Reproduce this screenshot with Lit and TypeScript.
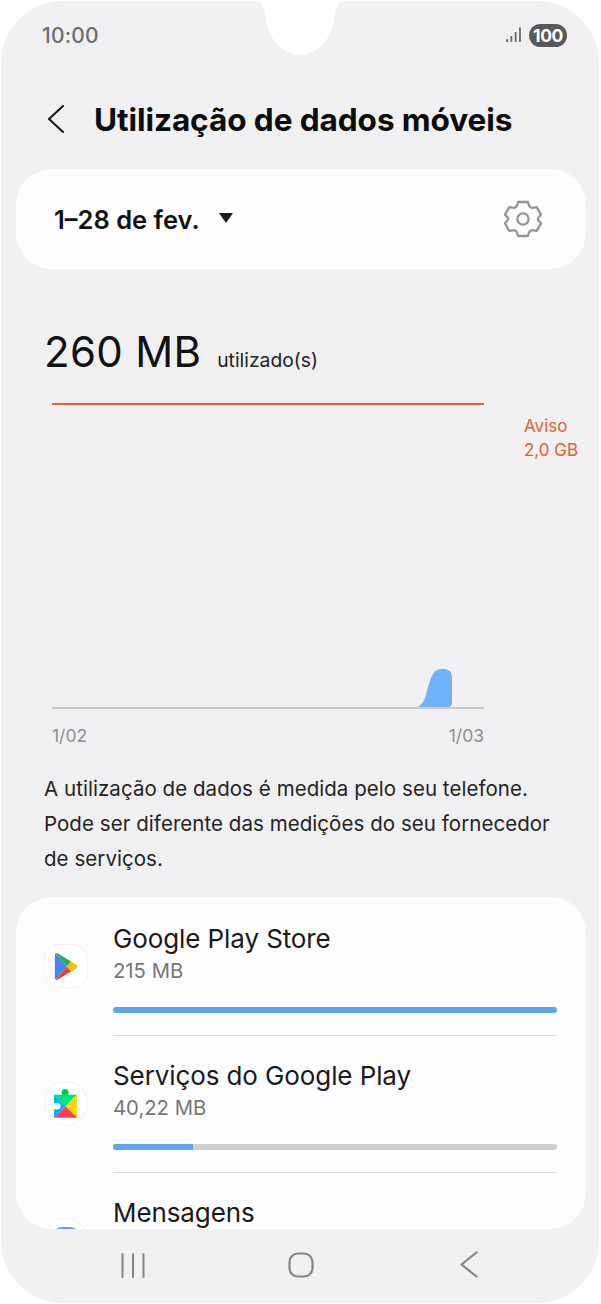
import { LitElement, html, css, nothing } from "lit";
import { customElement } from "lit/decorators.js";

@customElement("app-row")
class AppRow extends LitElement {
  static properties = { name: {}, size: {}, pct: { type: Number } };
  name = ""; size = ""; pct = 100;
  static styles = css`
    :host { display: flex; gap: 26px; }
    .ic { flex: none; width: 42px; height: 137px; box-sizing: border-box; padding-bottom: 3px; display: flex; align-items: center; justify-content: center; }
    .body { flex: 1; height: 137px; box-sizing: border-box; padding-top: 23px; border-bottom: 1px solid #dcdcde; }
    .n { font-size: 26px; line-height: 34px; color: #1a1a1a; letter-spacing: -0.1px; }
    .s { font-size: 20.3px; line-height: 28px; color: #77777a; margin-top: 1px; }
    .bar { height: 6px; border-radius: 3px; background: #cfcfd1; margin-top: 22px; overflow: hidden; }
    .fill { height: 100%; background: #5ea6ee; }
  `;
  render() {
    return html`<div class="ic"><slot></slot></div>
      <div class="body">
        <div class="n">${this.name}</div>
        ${this.size
          ? html`<div class="s">${this.size}</div>
              <div class="bar"><div class="fill" style="width:${this.pct}%"></div></div>`
          : nothing}
      </div>`;
  }
}

@customElement("app-root")
class AppRoot extends LitElement {
  static styles = css`
    :host { display: block; width: 601px; height: 1304px; background: #fff; font-family: Inter, "Noto Sans", sans-serif; overflow: hidden; }
    .phone { position: relative; box-sizing: border-box; margin: 1px 2px 0 1px; width: 598px; height: 1302px; background: #f1f1f3; border-radius: 62px; display: flex; flex-direction: column; overflow: hidden; }
    .notch { position: absolute; left: 251px; top: -1px; width: 96px; height: 57px; }
    .status { flex: none; height: 68px; display: flex; align-items: center; justify-content: space-between; padding: 0 32px 0 41px; }
    .time { font-size: 21px; font-weight: 500; color: #6e6e70; letter-spacing: 0.2px; }
    .sys { display: flex; align-items: center; gap: 7px; }
    .batt { width: 38px; height: 23px; border-radius: 12px; background: #59595b; color: #fff; font-size: 17.5px; font-weight: 700; display: flex; align-items: center; justify-content: center; letter-spacing: -0.4px; }
    .head { flex: none; height: 100px; display: flex; align-items: center; padding-left: 45px; box-sizing: border-box; }
    .head svg { margin-right: 30px; }
    h1 { margin: 0; font-size: 31.6px; font-weight: 700; color: #0c0c0c; letter-spacing: -0.1px; }
    .period { flex: none; margin: 0 13px 0 15px; height: 100px; background: #fdfdfe; border-radius: 36px; display: flex; align-items: center; justify-content: space-between; padding: 0 43px 0 38px; }
    .pl { display: flex; align-items: center; gap: 19px; font-size: 25.5px; font-weight: 600; color: #111; padding-top: 1px; }
    .tri { width: 0; height: 0; border-left: 7.5px solid transparent; border-right: 7.5px solid transparent; border-top: 10px solid #1c1c1c; margin-top: -3px; }
    .total { flex: none; display: flex; align-items: baseline; gap: 16px; padding: 53px 0 0 43px; height: 60px; }
    .big { font-size: 42px; font-weight: 400; color: #111; line-height: 60px; letter-spacing: 0.3px; }
    .unit { font-size: 19.3px; color: #222; }
    .chart { flex: none; display: flex; margin-top: 21px; }
    .plot { flex: none; margin-left: 51px; width: 432px; }
    .warn-line { height: 2px; background: #e2622e; }
    .area { height: 302px; border-bottom: 2px solid #c9c9cb; display: flex; align-items: flex-end; padding-left: 365px; }
    .area svg { display: block; }
    .side { flex: none; margin-left: 40px; padding-top: 11px; font-size: 17px; line-height: 24px; color: #e2622e; }
    .dates { display: flex; justify-content: space-between; font-size: 17.5px; color: #8f8f91; margin-top: 16px; line-height: 22px; }
    .note { flex: none; margin: 24px 0 0 43px; font-size: 20.5px; line-height: 35px; color: #242424; letter-spacing: 0.05px; }
    .list { flex: none; margin: 21px 13px 0 15px; height: 332px; background: #fdfdfe; border-radius: 36px; overflow: hidden; padding: 2px 29px 0 29px; box-sizing: border-box; }
    .nav { flex: 1; display: flex; justify-content: space-between; align-items: center; padding: 0 121px 3px 120px; }
    .home { margin-right: 4px; }
    .tile { width: 42px; height: 42px; border-radius: 15px; background: #fff; box-shadow: 0 0 0 1px #f3f3f5; display: flex; align-items: center; justify-content: center; }
    .tile.round { border-radius: 50%; }
    .msg { width: 26px; height: 26px; border-radius: 9px; background: #6f97e6; }
  `;
  render() {
    return html`<div class="phone">
      <svg class="notch" viewBox="0 0 96 57" width="96" height="57"><path fill="#fff" d="M0 0H96C88 0 84 5 83 14C81 40 64 55 48 55C32 55 15 40 13 14C12 5 8 0 0 0Z"/></svg>
      <div class="status">
        <span class="time">10:00</span>
        <div class="sys">
          <svg width="16" height="16" viewBox="0 0 16 16" fill="#6e6e70"><rect x="0" y="12" width="2.2" height="3" rx="1"/><rect x="4.4" y="9" width="1.9" height="6"/><rect x="8.7" y="5" width="1.9" height="10"/><rect x="13" y="0.5" width="1.9" height="14.5"/></svg>
          <span class="batt">100</span>
        </div>
      </div>
      <div class="head">
        <svg width="18" height="32" viewBox="0 0 18 32" fill="none" stroke="#1a1a1a" stroke-width="2.1" stroke-linecap="round" stroke-linejoin="round"><path d="M17 3L3 16L17 29"/></svg>
        <h1>Utilização de dados móveis</h1>
      </div>
      <div class="period">
        <div class="pl"><span>1–28 de fev.</span><span class="tri"></span></div>
        <svg width="40" height="40" viewBox="0 0 40 40" fill="none" stroke="#949496" stroke-width="2.3" stroke-linejoin="round"><path d="M15.2 3H24.8L26.6 7.6C27.4 8 28.1 8.4 28.8 8.9L33.7 8.2L38 15.6L35 19.4C35 20 35 20.6 35 21.2L38 24.4L33.7 31.8L28.8 31.1C28.1 31.6 27.4 32 26.6 32.4L24.8 37H15.2L13.4 32.4C12.6 32 11.9 31.6 11.2 31.1L6.3 31.8L2 24.4L5 20.6C5 20 5 19.4 5 18.8L2 15.6L6.3 8.2L11.2 8.9C11.9 8.4 12.6 8 13.4 7.6Z"/><circle cx="20" cy="20" r="5.6"/></svg>
      </div>
      <div class="total"><span class="big">260 MB</span><span class="unit">utilizado(s)</span></div>
      <div class="chart">
        <div class="plot">
          <div class="warn-line"></div>
          <div class="area">
            <svg width="36" height="40" viewBox="0 0 36 40"><path fill="#6fb1fb" d="M0 40C4 39 7 35 9 28C11 20 13 12 16 7C18 3 22 2 27 2C32 2 35 5 35 10V34C35 38 34 40 31 40Z"/></svg>
          </div>
          <div class="dates"><span>1/02</span><span>1/03</span></div>
        </div>
        <div class="side">Aviso<br>2,0 GB</div>
      </div>
      <div class="note">A utilização de dados é medida pelo seu telefone.<br>Pode ser diferente das medições do seu fornecedor<br>de serviços.</div>
      <div class="list">
        <app-row name="Google Play Store" size="215 MB" .pct=${100}>
          <div class="tile">
            <svg width="24" height="27" viewBox="0 0 28 30" preserveAspectRatio="none">
              <path fill="#4285f4" d="M1 2C1 1 1.6 .5 2 .5L15 15L2 29.5C1.4 29 1 28.4 1 27.6Z"/>
              <path fill="#34a853" d="M2 .5C3 0 4 0 5 .7L20 9.5L15 15Z"/>
              <path fill="#ea4335" d="M2 29.5C3 30 4 30 5 29.3L20 20.5L15 15Z"/>
              <path fill="#fbbc04" d="M20 9.5L26 13C27.6 14 27.6 16 26 17L20 20.5L15 15Z"/>
            </svg>
          </div>
        </app-row>
        <app-row name="Serviços do Google Play" size="40,22 MB" .pct=${18}>
          <div class="tile round">
            <svg width="24" height="30" viewBox="0 0 26 32">
              <circle cx="12" cy="4.5" r="3.8" fill="#00c853"/>
              <path fill="#00e676" d="M0 7H25L12.5 19.5Z"/>
              <path fill="#00b0ff" d="M0 7L12.5 19.5L0 32V23.5A4.2 4.2 0 0 0 0 15.5Z"/>
              <path fill="#ffd600" d="M25 7V32L12.5 19.5Z"/>
              <path fill="#ff3d57" d="M0 32L12.5 19.5L25 32Z"/>
              <circle cx="3.5" cy="19.5" r="3.6" fill="#fff"/>
            </svg>
          </div>
        </app-row>
        <app-row name="Mensagens">
          <div class="tile round"><div class="msg"></div></div>
        </app-row>
      </div>
      <div class="nav">
        <svg width="24" height="26" viewBox="0 0 24 26" stroke="#858587" stroke-width="2" stroke-linecap="round"><path d="M1.5 2V25M12 2V25M22.5 2V25"/></svg>
        <svg class="home" width="26" height="26" viewBox="0 0 26 26" fill="none" stroke="#858587" stroke-width="2.2"><rect x="1.5" y="1.5" width="23" height="23" rx="8.5"/></svg>
        <svg width="18" height="27" viewBox="0 0 18 27" fill="none" stroke="#858587" stroke-width="2.2" stroke-linecap="round" stroke-linejoin="round"><path d="M16.5 1.5L1.5 13.5L16.5 25.5"/></svg>
      </div>
    </div>`;
  }
}
